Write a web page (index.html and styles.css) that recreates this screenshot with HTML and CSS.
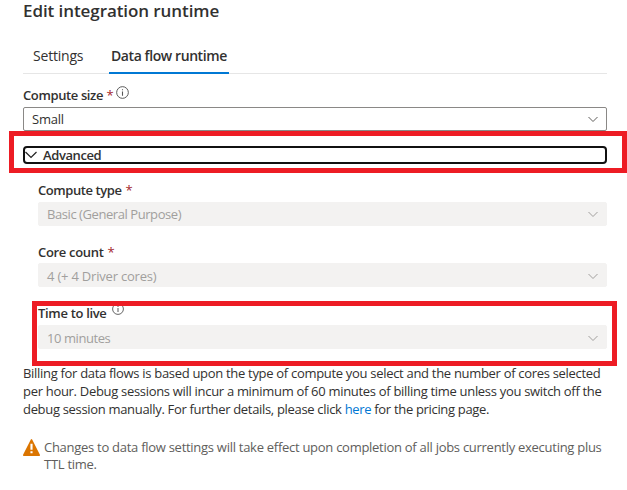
FILE: index.html
```html
<!DOCTYPE html>
<html lang="en">
<head>
<meta charset="utf-8">
<title>Edit integration runtime</title>
<link rel="stylesheet" href="styles.css">
</head>
<body>
<svg class="defs" width="0" height="0">
  <symbol id="chevron" viewBox="0 0 12 8"><path d="M1.5 2 6 6.500l4.500-4.500" fill="none" stroke="currentColor"/></symbol>
  <symbol id="info" viewBox="0 0 12 12"><circle cx="6" cy="6" r="5.400" fill="none" stroke="currentColor" stroke-width=".9"/><path d="M6 5v4M6 3v1" stroke="currentColor"/></symbol>
</svg>
<main class="panel">
  <h1 class="title">Edit integration runtime</h1>
  <nav class="tabs">
    <a class="tab">Settings</a>
    <a class="tab active">Data flow runtime</a>
  </nav>
  <div class="label size"><span>Compute size</span><span class="req">*</span><svg class="info"><use href="#info"/></svg></div>
  <div class="select"><span>Small</span><svg class="chev"><use href="#chevron"/></svg></div>
  <section class="advanced">
    <div class="mark mark-advanced"></div>
    <button class="toggle"><svg class="expand" viewBox="0 0 14 10"><path d="M1.500 2 7 7.500 12.500 2" fill="none" stroke="currentColor" stroke-width="1.200"/></svg><span>Advanced</span></button>
  </section>
  <section class="fields">
    <div class="field">
      <div class="label"><span class="tight">Compute type</span><span class="req">*</span></div>
      <div class="select disabled"><span class="tight">Basic (General Purpose)</span><svg class="chev"><use href="#chevron"/></svg></div>
    </div>
    <div class="field core">
      <div class="label"><span>Core count</span><span class="req">*</span></div>
      <div class="select disabled"><span class="loose">4 (+ 4 Driver cores)</span><svg class="chev"><use href="#chevron"/></svg></div>
    </div>
    <div class="field ttl">
      <div class="mark mark-ttl"></div>
      <div class="label"><span>Time to live</span><svg class="info"><use href="#info"/></svg></div>
      <div class="select disabled"><span class="tight">10 minutes</span><svg class="chev"><use href="#chevron"/></svg></div>
    </div>
  </section>
  <p class="billing">Billing for data flows is based upon the type of compute you select and the number of cores selected<br>per hour. Debug sessions will incur a minimum of 60 minutes of billing time unless you switch off the<br><span class="last-line">debug session manually. For further details, please click <a class="link">here</a> for the pricing page.</span></p>
  <div class="warning">
    <svg class="warn-icon" viewBox="0 0 16 16"><path d="M8 .8 15.300 15.200H.7Z" fill="#db7500" stroke="#db7500" stroke-width="1.400" stroke-linejoin="round"/><path d="M8 4.500v5.500M8 11.500v2" stroke="#fff" stroke-width="2"/></svg>
    <p>Changes to data flow settings will take effect upon completion of all jobs currently executing plus<br>TTL time.</p>
  </div>
</main>
</body>
</html>
```
FILE: styles.css
```css
* { box-sizing: border-box; }
body { margin: 0; background: #fff; color: #323130; font: 13px/18px "Open Sans", "Noto Sans", sans-serif; }
svg { flex: none; }
.defs { display: block; }
.panel { width: 627px; height: 490px; padding: 0 20px 0 23px; overflow: hidden; white-space: nowrap; }
h1, p { margin: 0; }
.title { height: 39px; font-size: 17px; line-height: 22px; font-weight: 600; letter-spacing: -.08px; }
.tabs { display: flex; gap: 16px; height: 35px; border-bottom: 1px solid #e6e6e6; font-size: 14px; letter-spacing: -.2px; }
.tab { width: 70px; height: 35px; padding: 8px 0 0 10px; }
.tab.active { width: 120px; padding-left: 2px; font-weight: 600; letter-spacing: -.42px; border-bottom: 2px solid #0078d4; }
.label { display: flex; height: 33px; padding-top: 12px; font-weight: 600; letter-spacing: -.32px; }
.req { margin-left: 4px; color: #a4262c; font-weight: 400; }
.label .info { width: 12px; height: 12px; margin: -1px 0 0 5px; color: #555; }
.size { letter-spacing: -.38px; }
.size .req { margin-left: 3.500px; }
.label.size .info { width: 13px; height: 13px; margin: 0 0 0 3px; }
.select { display: flex; align-items: center; justify-content: space-between; height: 24px; padding: 0 7px 0 8px; border: 1px solid #8a8886; border-radius: 2px; letter-spacing: -.2px; }
.tight { letter-spacing: -.43px; }
.loose { letter-spacing: -.2px; }
.chev { width: 12px; height: 8px; color: #605e5c; }
.disabled { background: #f3f2f1; border-color: #f3f2f1; color: #a19f9d; }
.disabled .chev { color: #a19f9d; }
.advanced { position: relative; height: 42px; padding-top: 15px; }
.toggle { display: flex; align-items: center; width: 584px; height: 18px; padding: 0; border: 2px solid #111; border-radius: 4px; background: #fff; color: inherit; font: inherit; font-weight: 600; line-height: 14px; letter-spacing: -.4px; }
.expand { width: 14px; height: 10px; margin: 0 5px 0 -1px; color: #222; }
.mark { position: absolute; border: 5px solid #ed1c24; pointer-events: none; }
.mark-advanced { left: -14px; top: 0; width: 618px; height: 42px; }
.fields { padding-left: 15px; }
.field { position: relative; }
.field .label { height: 29px; padding-top: 8px; }
.core .label { height: 37px; padding-top: 17px; }
.core .select { padding-top: 2px; }
.ttl .label { height: 38px; padding-top: 17px; }
.ttl .select { padding-top: 2px; }
.mark-ttl { left: -6px; top: 14px; width: 585px; height: 65px; z-index: 1; }
.billing { margin-top: 15px; letter-spacing: -.305px; }
.last-line { letter-spacing: -.32px; }
.link { color: #0078d4; }
.warning { display: flex; gap: 4px; margin-top: 21px; color: #605e5c; line-height: 17px; letter-spacing: -.275px; }
.warn-icon { width: 17px; height: 17px; }
```
